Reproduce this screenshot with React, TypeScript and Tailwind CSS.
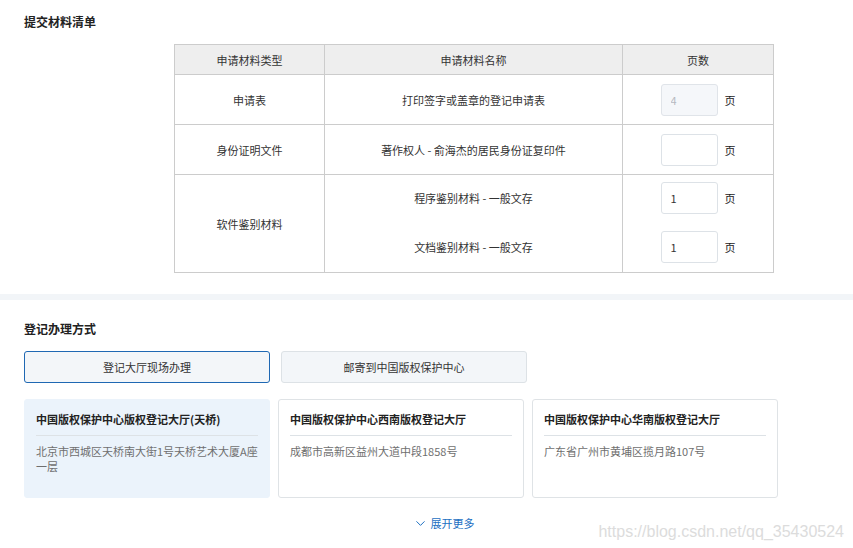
import React from 'react';
import { ChevronDown } from 'lucide-react';

interface Material {
  name: string;
  pages: string;
  disabled?: boolean;
}

interface Hall {
  title: string;
  address: string;
  active?: boolean;
}

const HALLS: Hall[] = [
  { title: '中国版权保护中心版权登记大厅(天桥)', address: '北京市西城区天桥南大街1号天桥艺术大厦A座一层', active: true },
  { title: '中国版权保护中心西南版权登记大厅', address: '成都市高新区益州大道中段1858号' },
  { title: '中国版权保护中心华南版权登记大厅', address: '广东省广州市黄埔区揽月路107号' },
];

const PageInput: React.FC<{ value: string; disabled?: boolean }> = ({ value, disabled }) => (
  <div className="flex items-center gap-[7px]">
    <input
      readOnly
      value={value}
      className={
        disabled
          ? 'w-[57px] h-[32px] rounded-[3px] border border-[#e0e4e9] bg-[#f5f7fa] px-[9px] text-[11px] text-[#b5b9c0] outline-none'
          : 'w-[57px] h-[32px] rounded-[3px] border border-[#dde2e7] bg-white px-[9px] text-[11px] text-[#333] outline-none'
      }
    />
    <span className="text-[11px] text-[#222]">页</span>
  </div>
);

const MaterialRow: React.FC<{ type: string; item: Material }> = ({ type, item }) => (
  <div className="flex h-[50px] border-b border-[#cccccc]">
    <div className="w-[150px] border-r border-[#cccccc] flex items-center justify-center">{type}</div>
    <div className="w-[298px] border-r border-[#cccccc] flex items-center justify-center">{item.name}</div>
    <div className="flex-1 flex items-center justify-center">
      <PageInput value={item.pages} disabled={item.disabled} />
    </div>
  </div>
);

export default function App() {
  return (
    <div className="relative w-[853px] h-[548px] overflow-hidden bg-white text-[#333] font-['Noto_Sans_CJK_SC',sans-serif]">
      {/* 提交材料清单 */}
      <section className="pt-[14px] pb-[21px]">
        <h2 className="pl-[24px] text-[12px] leading-[16px] font-bold text-[#222]">提交材料清单</h2>
        <div className="ml-[174px] mt-[14px] w-[600px] border border-[#cccccc] text-[11px] leading-[14px] text-[#333]">
          <div className="flex h-[30px] bg-[#eeeeee] border-b border-[#cccccc]">
            <div className="w-[150px] border-r border-[#cccccc] flex items-center justify-center">申请材料类型</div>
            <div className="w-[298px] border-r border-[#cccccc] flex items-center justify-center">申请材料名称</div>
            <div className="flex-1 flex items-center justify-center">页数</div>
          </div>
          <MaterialRow type="申请表" item={{ name: '打印签字或盖章的登记申请表', pages: '4', disabled: true }} />
          <MaterialRow type="身份证明文件" item={{ name: '著作权人 - 俞海杰的居民身份证复印件', pages: '' }} />
          <div className="flex h-[97px]">
            <div className="w-[150px] border-r border-[#cccccc] flex items-center justify-center">软件鉴别材料</div>
            <div className="flex-1 flex flex-col">
              {[
                { name: '程序鉴别材料 - 一般文存', pages: '1' },
                { name: '文档鉴别材料 - 一般文存', pages: '1' },
              ].map((m) => (
                <div key={m.name} className="flex h-[51px] first:h-[46px]">
                  <div className="w-[298px] border-r border-[#cccccc] flex items-center justify-center">{m.name}</div>
                  <div className="flex-1 flex items-center justify-center">
                    <PageInput value={m.pages} />
                  </div>
                </div>
              ))}
            </div>
          </div>
        </div>
      </section>

      <div className="h-[6px] bg-[#f2f5f8]" />

      {/* 登记办理方式 */}
      <section className="px-[24px] pt-[21px]">
        <h2 className="text-[12px] leading-[16px] font-bold text-[#222]">登记办理方式</h2>
        <div className="mt-[14px] flex gap-[11px] text-[11px]">
          <button className="w-[246px] h-[32px] rounded-[3px] border border-[#1f68b3] bg-[#f3f6f9] text-[#333]">
            登记大厅现场办理
          </button>
          <button className="w-[246px] h-[32px] rounded-[3px] border border-[#dde2e6] bg-[#f3f6f9] text-[#333]">
            邮寄到中国版权保护中心
          </button>
        </div>
        <div className="mt-[16px] flex gap-[8px]">
          {HALLS.map((h) => (
            <div
              key={h.title}
              className={
                h.active
                  ? 'w-[246px] h-[99px] rounded-[3px] border border-[#ebf3fb] bg-[#ebf3fb] px-[11px] pt-[12px]'
                  : 'w-[246px] h-[99px] rounded-[3px] border border-[#dfe3e6] bg-white px-[11px] pt-[12px]'
              }
            >
              <div className="text-[11px] leading-[14px] font-bold text-[#222]">{h.title}</div>
              <div className="mt-[9px] border-t border-[#dde2e6]" />
              <div className="mt-[8px] text-[11px] leading-[15px] text-[#6f6f6f]">{h.address}</div>
            </div>
          ))}
        </div>
        <div className="mt-[17px] pl-[34px] flex items-center justify-center gap-[3px] text-[11px] leading-[16px] text-[#1c6fc2]">
          <ChevronDown className="w-[15px] h-[15px]" strokeWidth={1.6} />
          <span>展开更多</span>
        </div>
      </section>

      <div className="absolute right-[9px] bottom-[7px] text-[16px] leading-[18px] text-[#dcdcdc] font-['Liberation_Sans',sans-serif]">
        https://blog.csdn.net/qq_35430524
      </div>
    </div>
  );
}
